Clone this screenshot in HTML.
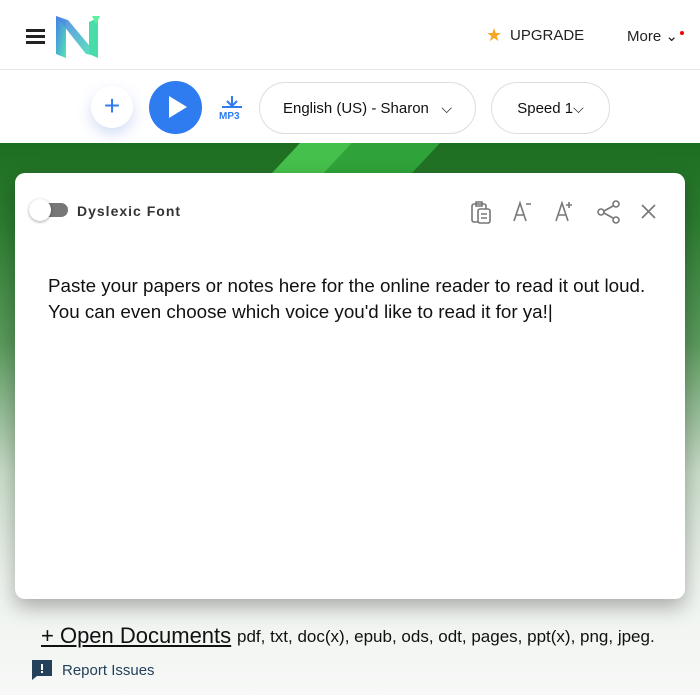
<!DOCTYPE html>
<html><head><style>
*{margin:0;padding:0;box-sizing:border-box}
body{width:700px;height:695px;overflow:hidden;background:#fff;font-family:"Liberation Sans",sans-serif;position:relative}
.hdr{position:absolute;top:0;left:0;width:700px;height:70px;border-bottom:1px solid #e6e6e6;background:#fff}
.tool{position:absolute;top:71px;left:0;width:700px;height:72px;background:#fff}
.bg{position:absolute;top:143px;left:0;width:700px;height:552px;background:linear-gradient(180deg,#1e6e22 0px,#2c7d30 80px,#5a9a5c 200px,#c9dcc9 330px,#eef3ee 440px,#f7f8f7 552px)}
.card{position:absolute;left:15px;top:173px;width:670px;height:426px;background:#fff;border-radius:10px;box-shadow:0 8px 20px rgba(0,0,0,.3)}
.pill{position:absolute;top:82px;height:52px;border:1px solid #ddd;border-radius:26px;font-size:15px;color:#111;display:flex;align-items:center;justify-content:center;background:#fff}
</style></head><body>
<div class="hdr">
 <div style="position:absolute;left:26px;top:29px;width:19px;height:3px;background:#222;box-shadow:0 6px 0 #222,0 12px 0 #222"></div>
 <svg style="position:absolute;left:56px;top:16px" width="44" height="42" viewBox="0 0 44 42">
  <defs><linearGradient id="g" x1="0" y1="0" x2="1" y2="1"><stop offset="0" stop-color="#4a7de8"/><stop offset="1" stop-color="#4ee8b4"/></linearGradient></defs>
  <polygon points="0,0 10,5 10,42 0,38" fill="url(#g)"/>
  <polygon points="0,0 12,4 42,40 30,38" fill="url(#g)" opacity=".9"/>
  <polygon points="33,6 42,2 42,42 33,38" fill="#48dca8"/>
  <polygon points="36,0 44,0 40,8" fill="#5ef0a0"/>
 </svg>
 <div style="position:absolute;left:486px;top:26px;color:#f5a623;font-size:18px;line-height:18px">★</div>
 <div style="position:absolute;left:510px;top:27px;font-size:15px;color:#222">UPGRADE</div>
 <div style="position:absolute;left:627px;top:27px;font-size:15px;color:#222">More ⌄</div>
 <div style="position:absolute;left:680px;top:31px;width:4px;height:4px;border-radius:2px;background:#e00"></div>
</div>
<div class="tool">
 <div style="position:absolute;left:91px;top:15px;width:42px;height:42px;border-radius:21px;background:#fff;box-shadow:0 6px 14px rgba(80,120,220,.25);color:#2f7cf0;font-size:28px;text-align:center;line-height:40px">+</div>
 <div style="position:absolute;left:149px;top:10px;width:53px;height:53px;border-radius:27px;background:#2f7cf0"></div>
 <svg style="position:absolute;left:168px;top:24px" width="20" height="24"><polygon points="1,1 19,12 1,23" fill="#fff"/></svg>
 <svg style="position:absolute;left:219px;top:24px" width="26" height="16"><path d="M13 1v9M8 6l5 5 5-5M3 12h20" stroke="#2f7cf0" stroke-width="2" fill="none"/></svg>
 <div style="position:absolute;left:219px;top:40px;font-size:10px;font-weight:bold;color:#2f7cf0">MP3</div>
</div>
<div class="pill" style="left:259px;width:217px">English (US) - Sharon&nbsp;&nbsp;&nbsp;<span style="font-size:14px">⌵</span></div>
<div class="pill" style="left:491px;width:119px">Speed 1 <span style="font-size:14px">⌵</span></div>
<div class="bg"></div>
<svg style="position:absolute;left:260px;top:143px" width="200" height="30"><polygon points="40,0 92,0 64,30 12,30" fill="#46c04c"/><polygon points="92,0 180,0 152,30 64,30" fill="#2fa33a"/></svg>
<div class="card">
 <div style="position:absolute;left:17px;top:30px;width:36px;height:14px;border-radius:7px;background:#777"></div>
 <div style="position:absolute;left:14px;top:26px;width:22px;height:22px;border-radius:11px;background:#fff;box-shadow:0 1px 3px rgba(0,0,0,.35)"></div>
 <div style="position:absolute;left:62px;top:30px;font-size:14px;font-weight:bold;color:#333;letter-spacing:1px">Dyslexic Font</div>
 <svg style="position:absolute;left:455px;top:26px" width="200" height="26" fill="none" stroke="#777" stroke-width="1.6">
  <rect x="2" y="5" width="14" height="18" rx="2"/><rect x="8" y="10" width="12" height="14" rx="2" fill="#fff"/><path d="M11 15h6M11 19h6M6 3h6v4H6z"/>
  <path d="M44 22l6-18 6 18M46 16h8M56 5h5"/>
  <path d="M86 22l6-18 6 18M88 16h8M99 3v6M96 6h6"/>
  <circle cx="146" cy="5" r="3"/><circle cx="131" cy="13" r="3"/><circle cx="146" cy="21" r="3"/><path d="M134 12l9-5M134 14l9 5"/>
  <path d="M172 6l13 13M185 6l-13 13"/>
 </svg>
 <div style="position:absolute;left:33px;top:100px;font-size:18.8px;line-height:26px;color:#111">Paste your papers or notes here for the online reader to read it out loud.<br>You can even choose which voice you'd like to read it for ya!|</div>
</div>
<div style="position:absolute;left:41px;top:623px;font-size:22px;color:#111;text-decoration:underline">+ Open Documents</div>
<div style="position:absolute;left:237px;top:627px;font-size:17px;color:#111">pdf, txt, doc(x), epub, ods, odt, pages, ppt(x), png, jpeg.</div>
<svg style="position:absolute;left:31px;top:659px" width="22" height="22"><path d="M1 1h20v16H6l-5 4z" fill="#24405a"/><rect x="10" y="5" width="2" height="6" fill="#fff"/><rect x="10" y="12" width="2" height="2" fill="#fff"/></svg>
<div style="position:absolute;left:62px;top:662px;font-size:15px;color:#24405a">Report Issues</div>
</body></html>
